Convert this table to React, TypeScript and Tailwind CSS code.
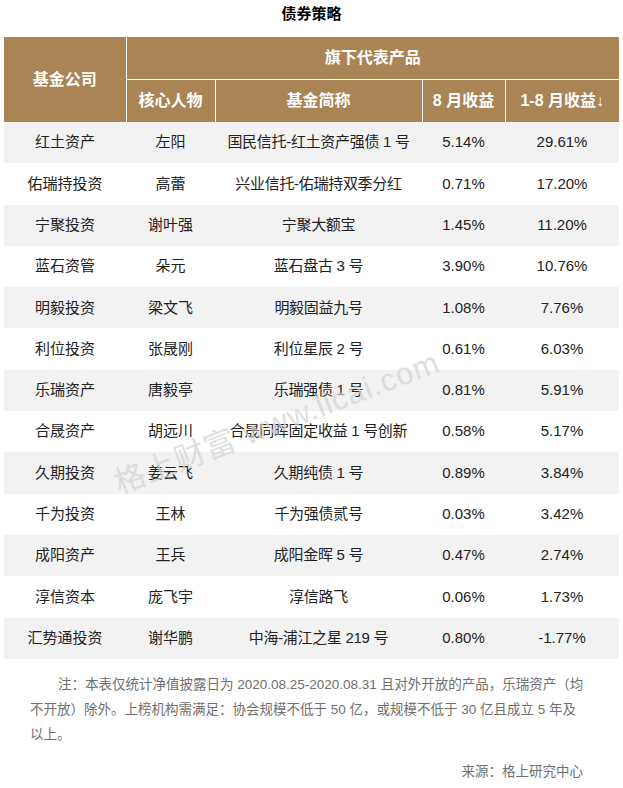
import React from 'react'

type Row = {
  company: string;
  person: string;
  fund: string;
  aug: string;
  ytd: string;
};

const rows: Row[] = [
  { company: "红土资产", person: "左阳", fund: "国民信托-红土资产强债 1 号", aug: "5.14%", ytd: "29.61%" },
  { company: "佑瑞持投资", person: "高蕾", fund: "兴业信托-佑瑞持双季分红", aug: "0.71%", ytd: "17.20%" },
  { company: "宁聚投资", person: "谢叶强", fund: "宁聚大额宝", aug: "1.45%", ytd: "11.20%" },
  { company: "蓝石资管", person: "朵元", fund: "蓝石盘古 3 号", aug: "3.90%", ytd: "10.76%" },
  { company: "明毅投资", person: "梁文飞", fund: "明毅固益九号", aug: "1.08%", ytd: "7.76%" },
  { company: "利位投资", person: "张晟刚", fund: "利位星辰 2 号", aug: "0.61%", ytd: "6.03%" },
  { company: "乐瑞资产", person: "唐毅亭", fund: "乐瑞强债 1 号", aug: "0.81%", ytd: "5.91%" },
  { company: "合晟资产", person: "胡远川", fund: "合晟同晖固定收益 1 号创新", aug: "0.58%", ytd: "5.17%" },
  { company: "久期投资", person: "姜云飞", fund: "久期纯债 1 号", aug: "0.89%", ytd: "3.84%" },
  { company: "千为投资", person: "王林", fund: "千为强债贰号", aug: "0.03%", ytd: "3.42%" },
  { company: "成阳资产", person: "王兵", fund: "成阳金晖 5 号", aug: "0.47%", ytd: "2.74%" },
  { company: "淳信资本", person: "庞飞宇", fund: "淳信路飞", aug: "0.06%", ytd: "1.73%" },
  { company: "汇势通投资", person: "谢华鹏", fund: "中海-浦江之星 219 号", aug: "0.80%", ytd: "-1.77%" },
];

function App() {
  return (
    <div className="w-[623px] h-[788px] bg-white relative overflow-hidden font-['Liberation_Sans','Noto_Sans_CJK_SC',sans-serif]">
      {/* title */}
      <div className="h-[37px] pt-[4px] text-center text-[15px] font-bold text-black leading-[20px]">债券策略</div>

      {/* table */}
      <table className="ml-[4px] w-[615px] border-collapse table-fixed">
        <colgroup>
          <col className="w-[122px]" />
          <col className="w-[89px]" />
          <col className="w-[207px]" />
          <col className="w-[83px]" />
          <col className="w-[114px]" />
        </colgroup>
        <thead>
          <tr className="h-[42px] bg-[#aa8455] text-white text-[16px] font-bold">
            <th rowSpan={2} className="border-r border-white text-center">基金公司</th>
            <th colSpan={4} className="border-b border-white text-center">旗下代表产品</th>
          </tr>
          <tr className="h-[43px] bg-[#aa8455] text-white text-[16px] font-bold">
            <th className="border-r border-white text-center">核心人物</th>
            <th className="border-r border-white text-center">基金简称</th>
            <th className="border-r border-white text-center">8 月收益</th>
            <th className="text-center">1-8 月收益↓</th>
          </tr>
        </thead>
        <tbody className="text-[15px] text-[#222]">
          {rows.map((r, i) => (
            <tr key={i} className={`h-[41.3px] ${i % 2 === 0 ? 'bg-[#f2f2f2]' : 'bg-white'}`}>
              <td className="text-center">{r.company}</td>
              <td className="text-center">{r.person}</td>
              <td className="text-center whitespace-nowrap tracking-[-0.3px]">{r.fund}</td>
              <td className="text-center">{r.aug}</td>
              <td className="text-center">{r.ytd}</td>
            </tr>
          ))}
        </tbody>
      </table>

      {/* notes */}
      <div className="px-[30px] pt-[13px] text-[13.5px] leading-[25px] text-[#6f6f6f] whitespace-nowrap">
        <p className="indent-[28px]">
          注：本表仅统计净值披露日为 2020.08.25-2020.08.31 且对外开放的产品，乐瑞资产（均<br />
          不开放）除外。上榜机构需满足：协会规模不低于 50 亿，或规模不低于 30 亿且成立 5 年及<br />
          以上。
        </p>
        <p className="mt-[12px] text-right pr-[10px]">来源：格上研究中心</p>
      </div>

      {/* watermark */}
      <div className="absolute left-[116px] top-[462px] -rotate-[21deg] origin-left text-[31px] text-[#d4d4d4] opacity-70 whitespace-nowrap pointer-events-none tracking-[1px]">
        格上财富 www.licai.com
      </div>
    </div>
  )
}

export default App
